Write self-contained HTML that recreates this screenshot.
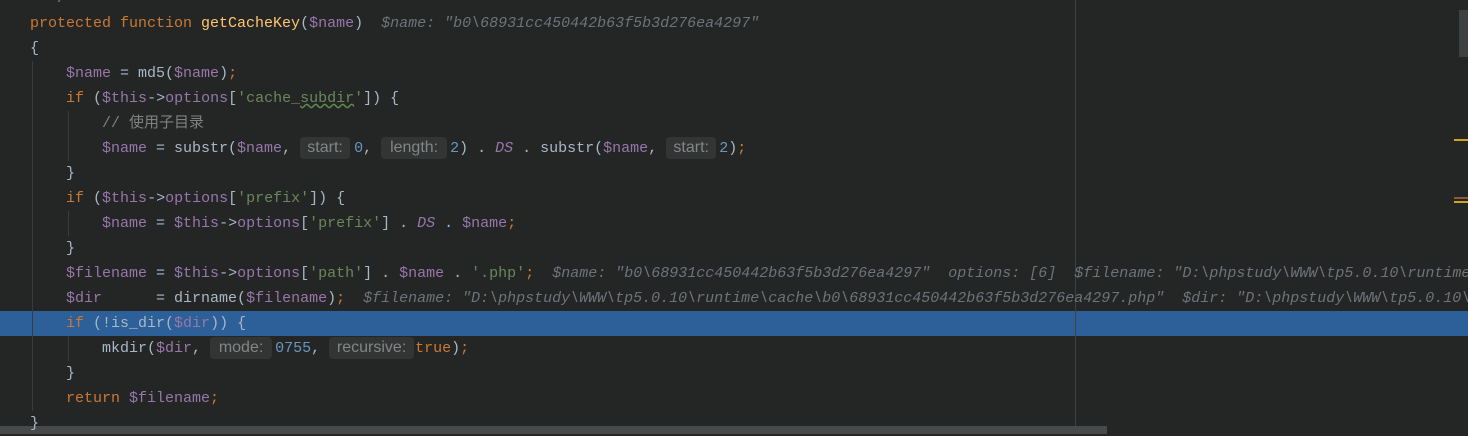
<!DOCTYPE html>
<html><head><meta charset="utf-8"><style>
html,body{margin:0;padding:0}
body{width:1468px;height:434px;overflow:hidden;background:#242626;position:relative;font-family:"Liberation Mono","Noto Sans CJK SC",monospace;font-size:15px;color:#a9b7c6}
.l{position:absolute;left:30px;height:25px;line-height:25px;white-space:pre}
.k{color:#cc7832}.v{color:#9876aa}.f{color:#ffc66d}.s{color:#6a8759}.n{color:#6897bb}.c{color:#808080}
.i{font-style:italic;color:#9876aa}
.d{font-style:italic;color:#6e7379}
.h{display:inline-block;box-sizing:border-box;text-align:center;background:#333535;color:#838686;font-family:"Liberation Sans",sans-serif;font-size:16px;line-height:22px;height:22px;border-radius:4px;margin-right:3px;vertical-align:0px}
.sel{position:absolute;left:0;top:311px;width:1468px;height:25px;background:#2d5f98}
.g{position:absolute;width:1px;background:#393c3c}
</style></head><body>
<div class="sel"></div>
<div class="g" style="left:32px;top:61px;height:350px"></div>
<div class="g" style="left:68px;top:111px;height:50px"></div>
<div class="g" style="left:68px;top:211px;height:25px"></div>
<div class="g" style="left:68px;top:336px;height:25px"></div>
<div style="position:absolute;left:1075px;top:0;width:1px;height:434px;background:#3f4242"></div>
<div style="position:absolute;left:0;top:426px;width:1107px;height:8px;background:#474a4a"></div>
<div style="position:absolute;left:1459px;top:10px;width:9px;height:47px;background:#3e4141"></div>
<div style="position:absolute;left:1454px;top:139px;width:14px;height:2px;background:#d4a21c"></div>
<div style="position:absolute;left:1454px;top:197px;width:14px;height:2px;background:#8a5a3c"></div>
<div style="position:absolute;left:1454px;top:201px;width:14px;height:2px;background:#d4a21c"></div>

<div class="l" style="top:-14px"><span class="c">  */</span></div>
<div class="l" style="top:11px"><span class="k">protected function </span><span class="f">getCacheKey</span>(<span class="v">$name</span>)  <span class="d">$name: "b0\68931cc450442b63f5b3d276ea4297"</span></div>
<div class="l" style="top:36px">{</div>
<div class="l" style="top:61px">    <span class="v">$name</span> = md5(<span class="v">$name</span>)<span class="k">;</span></div>
<div class="l" style="top:86px">    <span class="k">if </span>(<span class="v">$this</span>-><span class="v">options</span>[<span class="s">'cache_<span style="text-decoration:underline wavy #5f8c4a">subdir</span>'</span>]) {</div>
<div class="l" style="top:111px">        <span class="c">// 使用子目录</span></div>
<div class="l" style="top:136px">        <span class="v">$name</span> = substr(<span class="v">$name</span>, <span class="h" style="width:50px;margin-right:4px">start:</span><span class="n">0</span>, <span class="h" style="width:66px">length:</span><span class="n">2</span>) . <span class="i">DS</span> . substr(<span class="v">$name</span>, <span class="h" style="width:50px">start:</span><span class="n">2</span>)<span class="k">;</span></div>
<div class="l" style="top:161px">    }</div>
<div class="l" style="top:186px">    <span class="k">if </span>(<span class="v">$this</span>-><span class="v">options</span>[<span class="s">'prefix'</span>]) {</div>
<div class="l" style="top:211px">        <span class="v">$name</span> = <span class="v">$this</span>-><span class="v">options</span>[<span class="s">'prefix'</span>] . <span class="i">DS</span> . <span class="v">$name</span><span class="k">;</span></div>
<div class="l" style="top:236px">    }</div>
<div class="l" style="top:261px">    <span class="v">$filename</span> = <span class="v">$this</span>-><span class="v">options</span>[<span class="s">'path'</span>] . <span class="v">$name</span> . <span class="s">'.php'</span><span class="k">;</span>  <span class="d">$name: "b0\68931cc450442b63f5b3d276ea4297"  options: [6]  $filename: "D:\phpstudy\WWW\tp5.0.10\runtime\cache</span></div>
<div class="l" style="top:286px">    <span class="v">$dir</span>      = dirname(<span class="v">$filename</span>)<span class="k">;</span>  <span class="d">$filename: "D:\phpstudy\WWW\tp5.0.10\runtime\cache\b0\68931cc450442b63f5b3d276ea4297.php"  $dir: "D:\phpstudy\WWW\tp5.0.10\runtime</span></div>
<div class="l" style="top:311px">    <span class="k">if </span>(!is_dir(<span class="v">$dir</span>)) {</div>
<div class="l" style="top:336px">        mkdir(<span class="v">$dir</span>, <span class="h" style="width:62px">mode:</span><span class="n">0755</span>, <span class="h" style="width:85px;margin-right:1px">recursive:</span><span class="k">true</span>)<span class="k">;</span></div>
<div class="l" style="top:361px">    }</div>
<div class="l" style="top:386px">    <span class="k">return </span><span class="v">$filename</span><span class="k">;</span></div>
<div class="l" style="top:411px">}</div>
</body></html>
